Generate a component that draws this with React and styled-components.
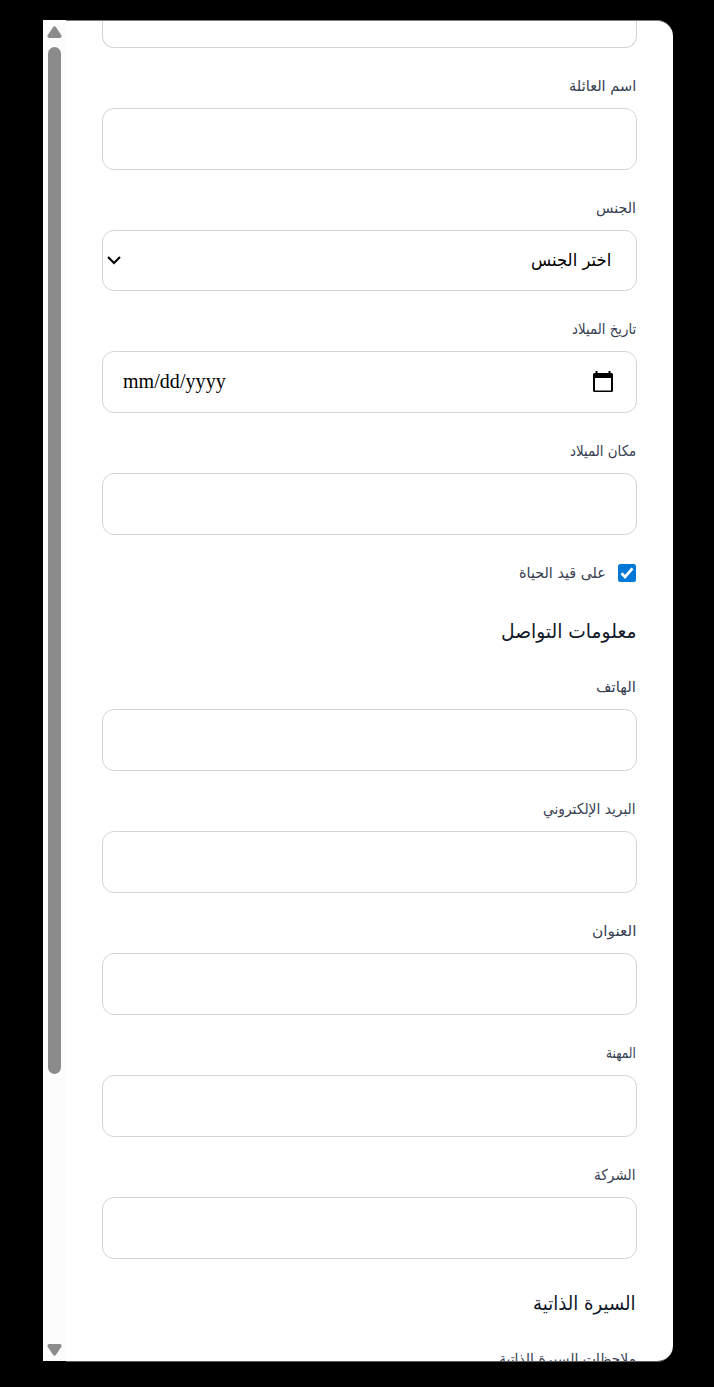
import React, { useLayoutEffect, useRef, useState } from "react";
import styled, { createGlobalStyle } from "styled-components";

const GlobalStyle = createGlobalStyle`
  * { box-sizing: border-box; }
  body {
    margin: 0;
    background: #000;
    font-family: "DejaVu Sans", "Noto Sans", sans-serif;
  }
`;

const Backdrop = styled.div`
  height: 1387px;
  padding: 20px 41px 25px 43px;
  background: #000;
  overflow: hidden;
`;

const Modal = styled.div`
  display: flex;
  align-items: flex-start;
  direction: ltr;
  height: 1342px;
`;

const Scrollbar = styled.div`
  display: flex;
  flex: 0 0 23px;
  flex-direction: column;
  align-items: center;
  justify-content: space-between;
  height: 1341px;
  padding: 6px 0 5px;
  background: #fcfcfc;
`;

const Track = styled.div`
  flex: 1;
  width: 13px;
  margin-top: 9px;
`;

const Thumb = styled.div`
  height: 1027px;
  border-radius: 7px;
  background: #8b8b8b;
`;

const Arrow = styled.svg`
  display: block;
  width: 15px;
  height: 12px;
  fill: #8b8b8b;
`;

const Form = styled.form`
  display: flex;
  flex: 1;
  flex-direction: column;
  gap: 24px;
  height: 1342px;
  padding: 0 36px;
  direction: rtl;
  overflow: hidden;
  background: #fff;
  border-top: 1px solid #7c7c7c;
  border-bottom: 1px solid #5c5c5c;
  border-radius: 0 16px 16px 0;

  & > * { flex-shrink: 0; }
`;

const Field = styled.div`
  display: flex;
  flex-direction: column;
  gap: 8px;
`;

const Label = styled.label`
  display: flex;
  align-items: center;
  height: 28px;
  padding-right: 1px;
  color: #374151;
  font-size: 15px;
  line-height: 28px;
`;

const control = `
  width: 100%;
  border: 1px solid #d1d5db;
  border-radius: 12px;
  background: #fff;
`;

const TextInput = styled.input`
  ${control}
  height: 62px;
  padding: 0 20px;
  font: 18px "DejaVu Sans", sans-serif;
  outline: none;
`;

const ClippedInput = styled(TextInput)`
  height: 27px;
  border-top: 0;
  border-radius: 0 0 12px 12px;
`;

const Picker = styled.div`
  ${control}
  display: flex;
  align-items: center;
  justify-content: space-between;
  height: ${(p) => p.$height}px;
  padding: ${(p) => p.$padding};
  color: #000;
  font-size: 17.5px;
`;

const DateText = styled.span`
  direction: ltr;
  padding-bottom: 3px;
  font: 20px/24px "Liberation Serif", serif;
  letter-spacing: 0.05px;
`;

const CheckRow = styled.div`
  display: flex;
  align-items: center;
  gap: 11px;
  height: 28px;
  padding-right: 1px;
`;

const CheckBox = styled.svg`
  display: block;
  width: 18px;
  height: 18px;
`;

const Heading = styled.h3`
  display: flex;
  align-items: center;
  height: 38px;
  margin: 0;
  padding: 3px 1px 0 0;
  color: #111827;
  font-size: 19.5px;
  font-weight: 400;
`;

const Stretch = styled.span`
  display: inline-block;
  white-space: nowrap;
  transform-origin: right center;
`;

/* Keeps a line of text to a set width. */
function FitText({ width, children }) {
  const ref = useRef(null);
  const [scale, setScale] = useState(1);
  useLayoutEffect(() => {
    setScale(width / ref.current.offsetWidth);
  }, [width, children]);
  return (
    <Stretch ref={ref} style={{ transform: `scaleX(${scale})` }}>
      {children}
    </Stretch>
  );
}

function FormField({ label, width, children }) {
  return (
    <Field>
      <Label><FitText width={width}>{label}</FitText></Label>
      {children || <TextInput aria-label={label} />}
    </Field>
  );
}

const contactFields = [
  ["الهاتف", 40],
  ["البريد الإلكتروني", 93],
  ["العنوان", 44],
  ["المهنة", 30],
  ["الشركة", 42],
];

export default function App() {
  return (
    <Backdrop>
      <GlobalStyle />
      <Modal>
        <Scrollbar>
          <Arrow viewBox="0 0 15 12">
            <path d="M6 1.2Q7.5-.5 9 1.2L14.2 9Q15.2 11.5 13 12H2Q-.2 11.5.8 9Z" />
          </Arrow>
          <Track><Thumb /></Track>
          <Arrow viewBox="0 0 15 12">
            <path d="M6 10.8Q7.5 12.5 9 10.8L14.2 3Q15.2.5 13 0H2Q-.2.5.8 3Z" />
          </Arrow>
        </Scrollbar>
        <Form>
          <ClippedInput aria-label="الاسم" />
          <FormField label="اسم العائلة" width={67} />
          <FormField label="الجنس" width={40}>
            <Picker $height={61} $padding="0 25px 2px 4px">
              <FitText width={80}>اختر الجنس</FitText>
              <svg width="14" height="10" viewBox="0 0 14 10">
                <path d="M1 2L7 8L13 2" fill="none" stroke="#000" strokeWidth="2" />
              </svg>
            </Picker>
          </FormField>
          <FormField label="تاريخ الميلاد" width={64}>
            <Picker $height={62} $padding="0 23px 0 20px">
              <svg width="20" height="22" viewBox="0 0 20 22">
                <path fillRule="evenodd" d="M2.5 0H4.5V2H15.5V0H17.5V2H18.5Q20 2 20 3.5V19.5Q20 21 18.5 21H1.5Q0 21 0 19.5V3.5Q0 2 1.5 2H2.5ZM2 7V19.5H18V7Z" />
              </svg>
              <DateText>mm/dd/yyyy</DateText>
            </Picker>
          </FormField>
          <FormField label="مكان الميلاد" width={66} />
          <CheckRow>
            <CheckBox viewBox="0 0 18 18">
              <rect width="18" height="18" rx="2.5" fill="#0078d7" />
              <path d="M3.5 9.3L7 12.9L14.5 4.3" fill="none" stroke="#fff" strokeWidth="2.8" />
            </CheckBox>
            <Label as="span"><FitText width={87}>على قيد الحياة</FitText></Label>
          </CheckRow>
          <Heading><FitText width={135}>معلومات التواصل</FitText></Heading>
          {contactFields.map(([label, width]) => (
            <FormField key={label} label={label} width={width} />
          ))}
          <Heading><FitText width={103}>السيرة الذاتية</FitText></Heading>
          <FormField label="ملاحظات السيرة الذاتية" width={137} />
        </Form>
      </Modal>
    </Backdrop>
  );
}
